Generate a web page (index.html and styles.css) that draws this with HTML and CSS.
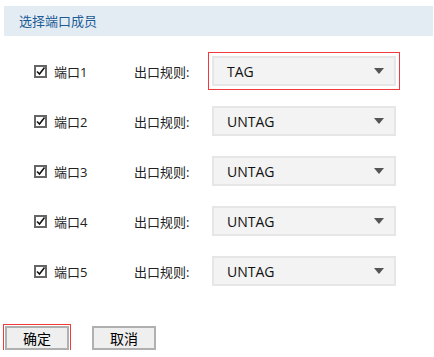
FILE: index.html
```html
<!DOCTYPE html>
<html lang="zh-CN">

<head>
    <meta charset="UTF-8">
    <meta name="viewport" content="width=device-width, initial-scale=1.0">
    <title>选择端口成员</title>
    <link rel="stylesheet" href="styles.css">
</head>

<body>
    <h3 class="panel-title">选择端口成员</h3>

    <ul class="port-list">
        <li class="port-row">
            <span class="chk">
                <svg viewBox="0 0 13 13" width="13" height="13"><rect x="1" y="1" width="11" height="11" fill="#fff" stroke="#666" stroke-width="2"/><path d="M3 6.5 L5.5 9 L10.5 2.5" fill="none" stroke="#111" stroke-width="1.6"/></svg>
            </span>
            <span class="port-name">端口1</span>
            <span class="rule-label">出口规则:</span>
            <button type="button" class="btn-select on">TAG</button>
        </li>
        <li class="port-row">
            <span class="chk">
                <svg viewBox="0 0 13 13" width="13" height="13"><rect x="1" y="1" width="11" height="11" fill="#fff" stroke="#666" stroke-width="2"/><path d="M3 6.5 L5.5 9 L10.5 2.5" fill="none" stroke="#111" stroke-width="1.6"/></svg>
            </span>
            <span class="port-name">端口2</span>
            <span class="rule-label">出口规则:</span>
            <button type="button" class="btn-select">UNTAG</button>
        </li>
        <li class="port-row">
            <span class="chk">
                <svg viewBox="0 0 13 13" width="13" height="13"><rect x="1" y="1" width="11" height="11" fill="#fff" stroke="#666" stroke-width="2"/><path d="M3 6.5 L5.5 9 L10.5 2.5" fill="none" stroke="#111" stroke-width="1.6"/></svg>
            </span>
            <span class="port-name">端口3</span>
            <span class="rule-label">出口规则:</span>
            <button type="button" class="btn-select">UNTAG</button>
        </li>
        <li class="port-row">
            <span class="chk">
                <svg viewBox="0 0 13 13" width="13" height="13"><rect x="1" y="1" width="11" height="11" fill="#fff" stroke="#666" stroke-width="2"/><path d="M3 6.5 L5.5 9 L10.5 2.5" fill="none" stroke="#111" stroke-width="1.6"/></svg>
            </span>
            <span class="port-name">端口4</span>
            <span class="rule-label">出口规则:</span>
            <button type="button" class="btn-select">UNTAG</button>
        </li>
        <li class="port-row">
            <span class="chk">
                <svg viewBox="0 0 13 13" width="13" height="13"><rect x="1" y="1" width="11" height="11" fill="#fff" stroke="#666" stroke-width="2"/><path d="M3 6.5 L5.5 9 L10.5 2.5" fill="none" stroke="#111" stroke-width="1.6"/></svg>
            </span>
            <span class="port-name">端口5</span>
            <span class="rule-label">出口规则:</span>
            <button type="button" class="btn-select">UNTAG</button>
        </li>
    </ul>

    <div class="actions">
        <button type="button" class="btn on">确定</button>
        <button type="button" class="btn">取消</button>
    </div>
</body>

</html>
```

FILE: styles.css
```css
html {
    font-size: 13px;
}

body {
    margin: 0;
    font-family: "Open Sans", "Noto Sans CJK SC", sans-serif;
    color: #222;
}

ul,
li {
    list-style: none;
    margin: 0;
    padding: 0;
}

button {
    cursor: pointer;
    font-family: inherit;
}

/* 제목 */
.panel-title {
    margin: 6px 1px 0 4px;
    height: 30px;
    padding-left: 15px;
    background: #e3ecf3;
    color: #1c5b96;
    font-size: 13px;
    font-weight: normal;
    line-height: 30px;
}

/* 포트 목록 */
.port-list {
    display: flex;
    flex-direction: column;
    gap: 20px;
    margin-top: 20px;
    padding-left: 34px;
}

.port-row {
    display: flex;
    align-items: center;
    height: 30px;
}

.chk {
    display: flex;
    width: 13px;
    height: 13px;
    margin-right: 7px;
    margin-top: 1px;
}

.port-name {
    width: 80px;
}

.rule-label {
    width: 78px;
}

.btn-select {
    position: relative;
    width: 184px;
    height: 30px;
    padding: 0 0 0 13px;
    border: 2px solid #e6e6e6;
    background: #f3f3f3;
    color: #111;
    font-size: 14px;
    text-align: left;
}

/* 화살표 */
.btn-select::after {
    content: "";
    position: absolute;
    top: 10px;
    right: 10px;
    border-top: 6px solid #555;
    border-left: 5px solid transparent;
    border-right: 5px solid transparent;
}

.btn-select.on {
    outline: 1px solid #f23a3a;
    outline-offset: 3px;
}

/* 버튼 */
.actions {
    display: flex;
    gap: 23px;
    margin-top: 40px;
    padding-left: 5px;
}

.btn {
    width: 64px;
    height: 24px;
    padding: 0;
    border: 2px solid #b0b0b0;
    background: #efefef;
    color: #000;
    font-size: 14px;
}

.btn.on {
    outline: 1px solid #f23a3a;
    outline-offset: 1px;
}
```
